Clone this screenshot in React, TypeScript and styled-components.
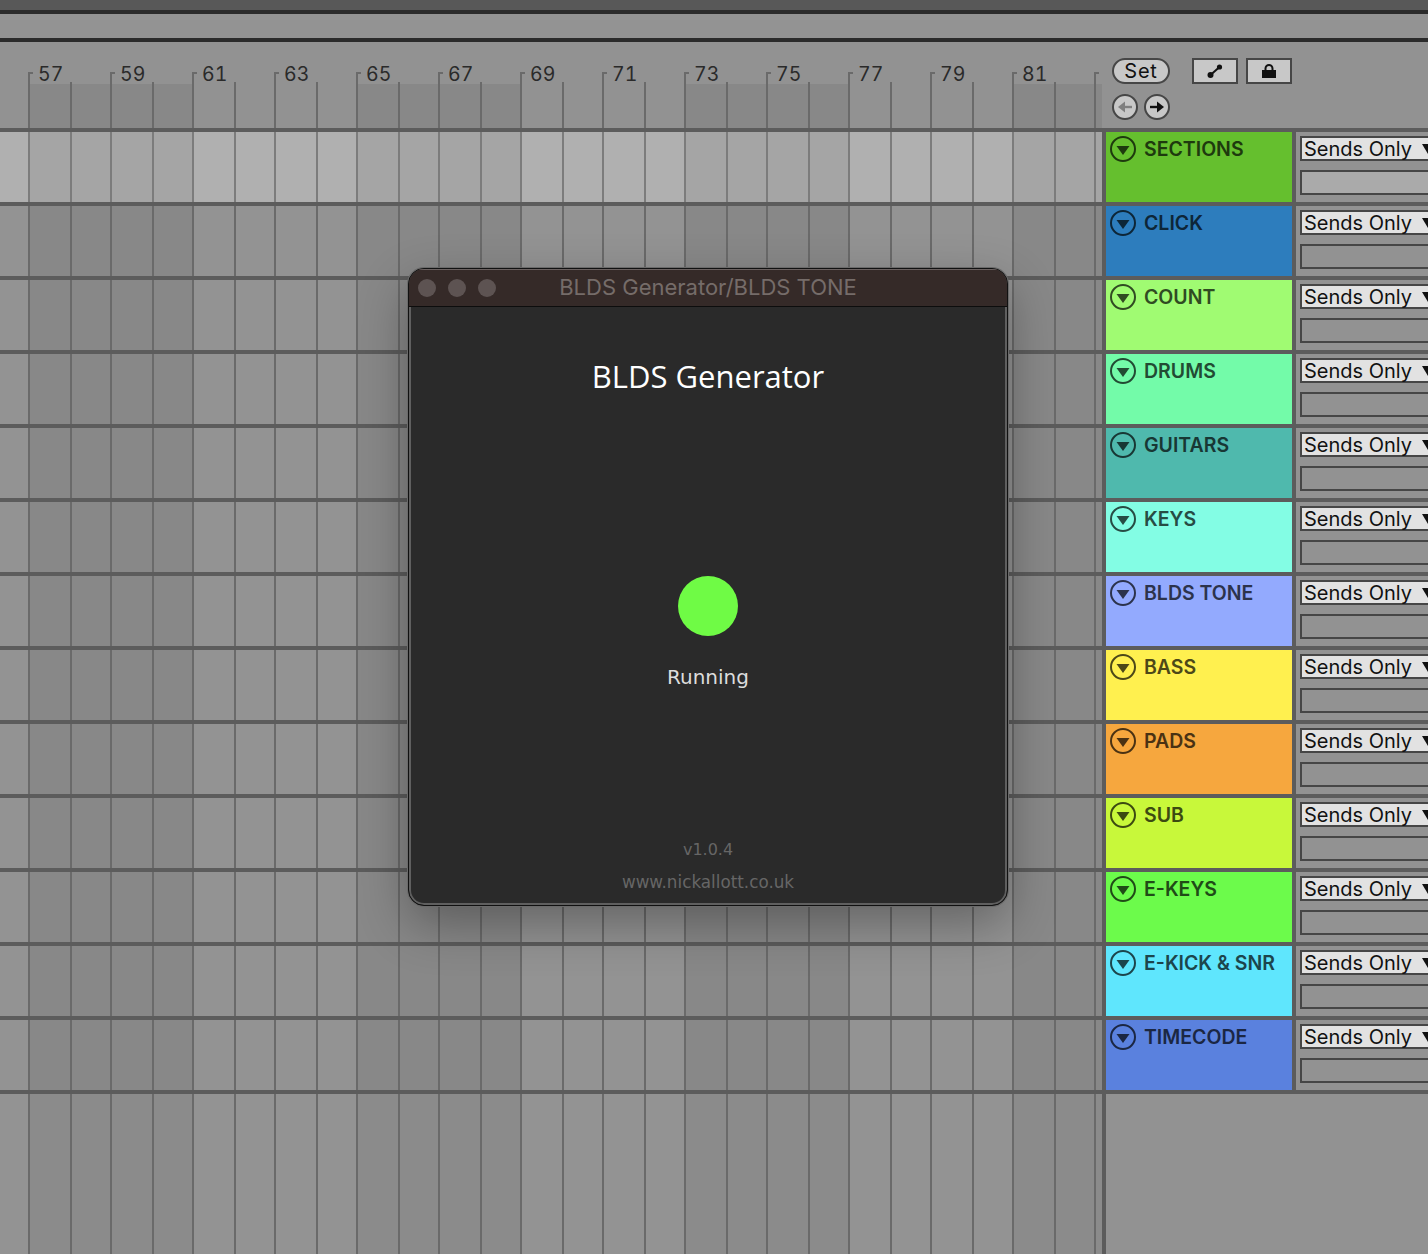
import React from 'react'
import styled, { createGlobalStyle } from 'styled-components'

const GlobalStyle = createGlobalStyle`
  html, body {
    margin: 0;
    padding: 0;
    background: #929292;
  }
  * {
    box-sizing: border-box;
  }
`

const LINE = '#5c5c5c'
const TICK = '#6a6a6a'
const GRID_X = [29, 71, 111, 153, 193, 235, 275, 317, 357, 399, 439, 481, 521, 563, 603, 645, 685, 727, 767, 809, 849, 891, 931, 973, 1013, 1055, 1095]
const BARS = [57, 59, 61, 63, 65, 67, 69, 71, 73, 75, 77, 79, 81]

const gridLines = (colour: string) =>
  GRID_X.map((x) => `linear-gradient(${colour}, ${colour}) ${x - 1}px 0 / 2px 100% no-repeat`).join(', ')

const bands = (light: string, dark: string) => {
  const stops: string[] = [`${light} 0 29px`]
  for (let x = 29, i = 0; x < 1102; x += 164, i++) {
    const colour = i % 2 === 0 ? dark : light
    stops.push(`${colour} ${x}px ${Math.min(x + 164, 1102)}px`)
  }
  return `linear-gradient(90deg, ${stops.join(', ')})`
}

const Page = styled.div`
  position: relative;
  width: 1428px;
  height: 1254px;
  overflow: hidden;
  display: flex;
  flex-direction: column;
  background: #929292;
  font-family: 'Inter', 'Liberation Sans', sans-serif;
`
const TopStrip = styled.div`
  height: 14px;
  flex: none;
  background: #585858;
  border-bottom: 4px solid #2b2b2b;
`
const SubStrip = styled.div`
  height: 28px;
  flex: none;
  background: #939393;
  border-bottom: 4px solid #2b2b2b;
`
const RulerRow = styled.div`
  height: 90px;
  flex: none;
  display: flex;
  border-bottom: 4px solid ${LINE};
`
const Ruler = styled.div`
  width: 1102px;
  flex: none;
  padding-top: 30px;
`
const BarLabels = styled.div`
  height: 12px;
  position: relative;
  background: ${GRID_X.map((x) => `linear-gradient(${TICK}, ${TICK}) ${x - 1}px 10px / 2px 2px no-repeat`).join(', ')};
`
const Bar = styled.div<{ $x: number }>`
  position: absolute;
  left: ${(p) => p.$x}px;
  top: 0;
  padding-left: 8px;
  border-left: 2px solid ${TICK};
  height: 12px;
  font-size: 19.5px;
  font-feature-settings: 'tnum';
  line-height: 5px;
  color: #2a2a2a;
  &::before {
    content: '';
    position: absolute;
    left: 0;
    top: 0;
    width: 3px;
    height: 2px;
    background: ${TICK};
  }
`
const RulerBands = styled.div`
  height: 44px;
  background: ${gridLines(TICK)}, ${bands('#929292', '#888888')};
`
const Tools = styled.div`
  flex: 1;
  display: flex;
  flex-direction: column;
  gap: 10px;
  padding: 16px 0 0 10px;
`
const ToolRow = styled.div`
  display: flex;
  align-items: center;
`
const SetButton = styled.div`
  width: 58px;
  height: 26px;
  border: 2px solid #464646;
  border-radius: 13px;
  background: #c8c8c8;
  color: #111;
  font-size: 20px;
  letter-spacing: 0.8px;
  line-height: 23px;
  text-align: center;
  margin-right: 22px;
`
const SquareButton = styled.div`
  width: 46px;
  height: 26px;
  border: 2px solid #464646;
  background: #c8c8c8;
  margin-right: 8px;
  display: flex;
  align-items: center;
  justify-content: center;
`
const RoundButton = styled.div`
  width: 26px;
  height: 26px;
  border: 2px solid #464646;
  border-radius: 50%;
  background: #c8c8c8;
  margin-right: 6px;
  display: flex;
  align-items: center;
  justify-content: center;
`
const TrackRow = styled.div`
  height: 74px;
  flex: none;
  display: flex;
  border-bottom: 4px solid ${LINE};
`
const Lane = styled.div<{ $active?: boolean }>`
  width: 1106px;
  flex: none;
  border-right: 4px solid ${LINE};
  background: ${(p) =>
    p.$active
      ? `${gridLines('#7c7c7c')}, ${bands('#b0b0b0', '#a5a5a5')}`
      : `${gridLines(TICK)}, ${bands('#939393', '#888888')}`};
`
const TrackHeader = styled.div<{ $bg: string; $fg: string }>`
  width: 190px;
  flex: none;
  display: flex;
  align-items: flex-start;
  gap: 8px;
  padding: 4px;
  border-right: 4px solid ${LINE};
  background: ${(p) => p.$bg};
  background-clip: padding-box;
  color: ${(p) => p.$fg};
`
const TrackName = styled.span`
  font-size: 19.5px;
  font-weight: 600;
  line-height: 26px;
  white-space: nowrap;
`
const Sends = styled.div`
  flex: 1;
  min-width: 0;
  display: flex;
  flex-direction: column;
  gap: 9px;
  padding: 4px 0 0 4px;
`
const SendSelect = styled.div`
  width: 140px;
  height: 25px;
  border: 2px solid #464646;
  background: #e2e2e2;
  color: #111;
  font-size: 20px;
  line-height: 23px;
  padding-left: 2px;
  position: relative;
  white-space: nowrap;
  &::after {
    content: '';
    position: absolute;
    left: 120px;
    top: 6px;
    border-left: 6px solid transparent;
    border-right: 6px solid transparent;
    border-top: 10px solid #111;
  }
`
const SendBox = styled.div<{ $active?: boolean }>`
  width: 140px;
  height: 25px;
  border: 2px solid #464646;
  background: ${(p) => (p.$active ? '#aaaaaa' : 'transparent')};
`
const BottomLane = styled.div`
  width: 1106px;
  flex: 1;
  border-right: 4px solid ${LINE};
  background: ${gridLines(TICK)}, ${bands('#939393', '#8b8b8b')};
`
const Dialog = styled.div`
  position: absolute;
  left: 408px;
  top: 268px;
  width: 600px;
  height: 638px;
  border-radius: 16px;
  border: 1.5px solid #111;
  overflow: hidden;
  display: flex;
  flex-direction: column;
  background: #2a2a2a;
  box-shadow: inset 0 0 0 2px #5f5f5f, 0 0 0 1px #6a6a6a, 0 18px 50px rgba(0, 0, 0, 0.32);
  font-family: 'DejaVu Sans', 'Open Sans', sans-serif;
`
const TitleBar = styled.div`
  height: 38px;
  flex: none;
  position: relative;
  display: flex;
  align-items: center;
  justify-content: center;
  padding-bottom: 2px;
  background: #352a28;
  border-top: 1px solid #6a6160;
  border-bottom: 1px solid #0d0d0d;
  color: #756c69;
  font-size: 22px;
  font-family: 'Inter', sans-serif;
`
const Lights = styled.div`
  position: absolute;
  left: 9px;
  top: 9px;
  display: flex;
  gap: 12px;
`
const Light = styled.span`
  width: 18px;
  height: 18px;
  border-radius: 50%;
  background: #5d5352;
`
const DialogBody = styled.div`
  flex: 1;
  display: flex;
  flex-direction: column;
  align-items: center;
`
const DialogTitle = styled.div`
  margin-top: 49px;
  font-family: 'Open Sans', sans-serif;
  font-size: 31px;
  line-height: 40px;
  color: #fff;
`
const StatusDot = styled.div`
  margin-top: 180px;
  width: 60px;
  height: 60px;
  border-radius: 50%;
  background: #6ffb45;
`
const StatusText = styled.div`
  margin-top: 28px;
  font-size: 20px;
  line-height: 26px;
  color: #dddddd;
`
const Version = styled.div`
  margin-top: 150px;
  font-size: 16px;
  line-height: 20px;
  color: #666666;
`
const Website = styled.div`
  margin-top: 12px;
  font-size: 16.8px;
  line-height: 20px;
  color: #666666;
`

const tracks = [
  { name: 'SECTIONS', bg: '#65bf2e', fg: '#1e3a0e' },
  { name: 'CLICK', bg: '#2d7dbd', fg: '#0d2638' },
  { name: 'COUNT', bg: '#a0fb72', fg: '#304b22' },
  { name: 'DRUMS', bg: '#73fba9', fg: '#224b33' },
  { name: 'GUITARS', bg: '#4fb9ad', fg: '#183734' },
  { name: 'KEYS', bg: '#83fde4', fg: '#274c44' },
  { name: 'BLDS TONE', bg: '#93aafe', fg: '#2c334c' },
  { name: 'BASS', bg: '#fff04f', fg: '#4c4818' },
  { name: 'PADS', bg: '#f6a73e', fg: '#4a3213' },
  { name: 'SUB', bg: '#c8f83a', fg: '#3c4a11' },
  { name: 'E-KEYS', bg: '#6cfb4b', fg: '#204b17' },
  { name: 'E-KICK & SNR', bg: '#5fe6fd', fg: '#1c454c' },
  { name: 'TIMECODE', bg: '#5a81de', fg: '#1b2743' },
]

const FoldIcon = () => (
  <svg width="26" height="26" viewBox="0 0 26 26">
    <circle cx="13" cy="13" r="12" fill="none" stroke="currentColor" strokeWidth="2" />
    <path d="M6.5 10h13L13 19z" fill="currentColor" />
  </svg>
)

const ArrowIcon = ({ colour, flip }: { colour: string; flip?: boolean }) => (
  <svg width="16" height="12" viewBox="0 0 16 12" style={flip ? { transform: 'scaleX(-1)' } : undefined}>
    <path d="M1 6h8" stroke={colour} strokeWidth="2.4" />
    <path d="M8 0.5 15 6l-7 5.5z" fill={colour} />
  </svg>
)

export default function App() {
  return (
    <Page>
      <GlobalStyle />
      <TopStrip />
      <SubStrip />
      <RulerRow>
        <Ruler>
          <BarLabels>
            {BARS.map((bar, i) => (
              <Bar key={bar} $x={GRID_X[i * 2] - 1}>
                {bar}
              </Bar>
            ))}
            <Bar $x={1094} />
          </BarLabels>
          <RulerBands />
        </Ruler>
        <Tools>
          <ToolRow>
            <SetButton>Set</SetButton>
            <SquareButton>
              <svg width="16" height="14" viewBox="0 0 16 14">
                <path d="M3.5 11 12.5 3" stroke="#111" strokeWidth="2" />
                <circle cx="3.5" cy="11" r="3" fill="#111" />
                <circle cx="12.5" cy="3" r="2.6" fill="#111" />
              </svg>
            </SquareButton>
            <SquareButton>
              <svg width="14" height="14" viewBox="0 0 14 14">
                <path d="M3.5 6V4.5a3.5 3.5 0 0 1 7 0V6" fill="none" stroke="#111" strokeWidth="2" />
                <rect x="0" y="6" width="14" height="8" fill="#111" />
              </svg>
            </SquareButton>
          </ToolRow>
          <ToolRow>
            <RoundButton>
              <ArrowIcon colour="#808080" flip />
            </RoundButton>
            <RoundButton>
              <ArrowIcon colour="#111" />
            </RoundButton>
          </ToolRow>
        </Tools>
      </RulerRow>
      {tracks.map((track, i) => (
        <TrackRow key={track.name}>
          <Lane $active={i === 0} />
          <TrackHeader $bg={track.bg} $fg={track.fg}>
            <FoldIcon />
            <TrackName>{track.name}</TrackName>
          </TrackHeader>
          <Sends>
            <SendSelect>Sends Only</SendSelect>
            <SendBox $active={i === 0} />
          </Sends>
        </TrackRow>
      ))}
      <BottomLane />
      <Dialog>
        <TitleBar>
          <Lights>
            <Light />
            <Light />
            <Light />
          </Lights>
          BLDS Generator/BLDS TONE
        </TitleBar>
        <DialogBody>
          <DialogTitle>BLDS Generator</DialogTitle>
          <StatusDot />
          <StatusText>Running</StatusText>
          <Version>v1.0.4</Version>
          <Website>www.nickallott.co.uk</Website>
        </DialogBody>
      </Dialog>
    </Page>
  )
}
